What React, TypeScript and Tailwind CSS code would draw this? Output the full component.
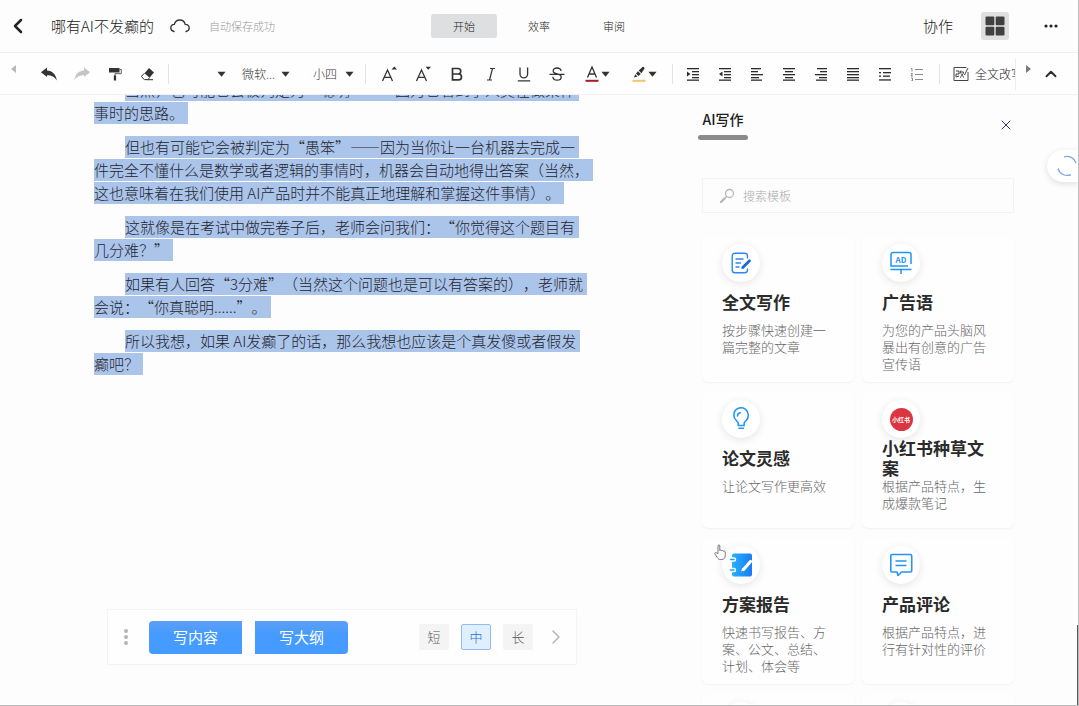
import React from 'react';
import { ChevronLeft, ChevronUp, ChevronRight, X } from 'lucide-react';

const Caret = () => (
  <svg viewBox="0 0 10 6" className="w-[9px] h-[6px] shrink-0 text-[#333] pointer-events-none" fill="currentColor">
    <path d="M0.5 0.5h9L5 6z" />
  </svg>
);

const Divider = ({ className }: { className: string }) => (
  <div className={`w-px h-5 bg-[#e3e3e3] shrink-0 ${className}`}></div>
);

const ToolButton = ({ label, className, children }: { label: string; className: string; children: React.ReactNode }) => (
  <button aria-label={label} className={`h-8 shrink-0 flex items-center justify-center text-[#2b2b2b] ${className}`}>
    {children}
  </button>
);

const Dropdown = ({ label, value, className }: { label: string; value: string; className: string }) => (
  <div className="w-16 shrink-0 flex items-center justify-end gap-1">
    <select
      aria-label={label}
      className={`appearance-none bg-transparent text-[12px] leading-4 font-light text-[#333] outline-none ${className}`}
    >
      <option>{value}</option>
    </select>
    <Caret />
  </div>
);

// Horizontal strokes of the paragraph icons: [x, y, width]
const Lines = ({ rows, children }: { rows: number[][]; children?: React.ReactNode }) => (
  <svg viewBox="0 0 14 14" className="w-[14px] h-[14px]" fill="currentColor">
    {rows.map(([x, y, w], i) => (
      <rect key={i} x={x} y={y} width={w} height="1.3" />
    ))}
    {children}
  </svg>
);

const paragraphTools = [
  {
    label: '增加缩进',
    icon: (
      <Lines rows={[[1, 1, 12], [6, 4, 7], [6, 7, 7], [6, 10, 7], [1, 12.5, 12]]}>
        <path d="M1 4.5v5L4.5 7z" />
      </Lines>
    ),
  },
  {
    label: '减少缩进',
    icon: (
      <Lines rows={[[1, 1, 12], [6, 4, 7], [6, 7, 7], [6, 10, 7], [1, 12.5, 12]]}>
        <path d="M4.5 4.5v5L1 7z" />
      </Lines>
    ),
  },
  { label: '左对齐', icon: <Lines rows={[[1, 1, 10], [1, 4, 7], [1, 7, 12], [1, 10, 8], [1, 12.5, 11]]} /> },
  { label: '居中', icon: <Lines rows={[[1, 1, 12], [3, 4, 8], [1, 7, 12], [3, 10, 8], [1, 12.5, 12]]} /> },
  { label: '右对齐', icon: <Lines rows={[[3, 1, 10], [6, 4, 7], [1, 7, 12], [5, 10, 8], [2, 12.5, 11]]} /> },
  { label: '两端对齐', icon: <Lines rows={[[1, 1, 12], [1, 4, 12], [1, 7, 12], [1, 10, 12], [1, 12.5, 12]]} /> },
  {
    label: '项目符号',
    icon: <Lines rows={[[1, 1, 12], [1, 5, 2], [5, 5, 8], [1, 8.5, 2], [5, 8.5, 7], [1, 12.3, 12]]} />,
  },
  {
    label: '编号列表',
    icon: (
      <svg viewBox="0 0 14 14" className="w-[14px] h-[14px]" fill="none" stroke="#888" strokeWidth="1">
        <path d="M5 2.5h8M5 7.5h8M5 12.5h8M1 1.5h1v3M1 6.5h1.5L1 9h2M1 11h1.5v3H1" />
      </svg>
    ),
  },
];

const paragraphs = [
  ['当然，也可能它会被判定为“聪明”——因为它看到了人类在做某件', '事时的思路。'],
  [
    '但也有可能它会被判定为“愚笨”——因为当你让一台机器去完成一',
    '件完全不懂什么是数学或者逻辑的事情时，机器会自动地得出答案（当然，',
    '这也意味着在我们使用 AI产品时并不能真正地理解和掌握这件事情）。',
  ],
  ['这就像是在考试中做完卷子后，老师会问我们：“你觉得这个题目有', '几分难？”'],
  ['如果有人回答“3分难”（当然这个问题也是可以有答案的），老师就', '会说：“你真聪明......”。'],
  ['所以我想，如果 AI发癫了的话，那么我想也应该是个真发傻或者假发', '癫吧？'],
];

const ArticleIcon = () => (
  <svg viewBox="0 0 24 24" className="w-6 h-6" fill="none" stroke="#2f86f0" strokeWidth="1.4" strokeLinecap="round">
    <path d="M18.5 7V5a2.8 2.8 0 0 0-2.8-2.8H6A2.8 2.8 0 0 0 3.2 5v14A2.8 2.8 0 0 0 6 21.800h9.700a2.800 2.800 0 0 0 2.800-2.800v-1" />
    <path d="M7 8h7M7 12h4.500M7 16h3" />
    <path d="M20.500 9.800l-6.500 6.500" stroke="#1667e0" strokeWidth="2.800" />
    <path d="M13.200 15.500l-1 2.700 2.700-1z" fill="#1667e0" stroke="none" />
  </svg>
);

const AdIcon = () => (
  <svg viewBox="0 0 24 24" className="w-6 h-6" fill="none" stroke="#1e96f5" strokeWidth="1.500">
    <path d="M22 13V3.500a2 2 0 0 0-2-2H4a2 2 0 0 0-2 2V15h17M1.500 18.500h21M12 18.500V23" />
    <text x="12" y="11.500" fontSize="8" fontWeight="bold" textAnchor="middle" fill="#1e96f5" stroke="none">AD</text>
  </svg>
);

const BulbIcon = () => (
  <svg viewBox="0 0 24 24" className="w-6 h-6" fill="none" stroke="#2196f3" strokeWidth="1.600" strokeLinecap="round">
    <path d="M9.300 18.500v-1.700c0-1.300-.8-2.100-1.900-3.300A7.200 7.200 0 1 1 19.200 9c0 2-1 3.500-2.400 4.800-1 1-1.700 1.700-1.700 3v1.700z" />
    <path d="M10 21.300h4.500M8.500 9a3.600 3.600 0 0 1 2.700-3.200" />
  </svg>
);

const RedBookIcon = () => (
  <div className="w-[23px] h-[23px] rounded-full bg-[#dc3540] flex items-center justify-center">
    <svg viewBox="0 0 20 10" className="w-5 h-[10px]">
      <text x="10" y="7.500" fontSize="6" fontWeight="bold" textAnchor="middle" fill="#fff">小红书</text>
    </svg>
  </div>
);

const NotebookIcon = () => (
  <svg viewBox="0 0 24 24" className="w-6 h-6">
    <defs>
      <linearGradient id="notebook" x1="0" x2="1">
        <stop offset="0" stopColor="#27b1fb" />
        <stop offset="1" stopColor="#1b7bf2" />
      </linearGradient>
    </defs>
    <rect x="3" y="0.500" width="20" height="23" rx="2" fill="url(#notebook)" />
    <path d="M1.500 6.500H5M1.500 17H5" stroke="#fff" strokeWidth="4.500" strokeLinecap="round" />
    <path d="M1.500 6.500H5M1.500 17H5" stroke="#1fa0f8" strokeWidth="1.500" strokeLinecap="round" />
    <path d="M21.500 8.500l-7 8" stroke="#fff" strokeWidth="3.200" strokeLinecap="round" />
    <path d="M13.500 15l-1.500 3.500 3.500-1.500z" fill="#fff" />
  </svg>
);

const CommentIcon = () => (
  <svg viewBox="0 0 24 24" className="w-6 h-6" fill="none" stroke="#2594f5" strokeWidth="1.600" strokeLinejoin="round">
    <path d="M3 1.500h18.500a1.200 1.200 0 0 1 1.200 1.200v15.100a1.200 1.200 0 0 1-1.200 1.200H12.500L9 22.500 8 19H3a1.200 1.200 0 0 1-1.200-1.200V2.700A1.200 1.200 0 0 1 3 1.500z" />
    <path d="M6.500 8h11M6.500 12.500h11" />
  </svg>
);

const templates = [
  { title: '全文写作', text: '按步骤快速创建一篇完整的文章', icon: <ArticleIcon /> },
  { title: '广告语', text: '为您的产品头脑风暴出有创意的广告宣传语', icon: <AdIcon /> },
  { title: '论文灵感', text: '让论文写作更高效', icon: <BulbIcon /> },
  { title: '小红书种草文案', text: '根据产品特点，生成爆款笔记', icon: <RedBookIcon /> },
  { title: '方案报告', text: '快速书写报告、方案、公文、总结、计划、体会等', icon: <NotebookIcon /> },
  { title: '产品评论', text: '根据产品特点，进行有针对性的评价', icon: <CommentIcon /> },
  { title: '', text: '', icon: null },
  { title: '', text: '', icon: null },
];

const Header = () => (
  <header className="h-[53px] shrink-0 border-b border-[#efefef] grid grid-cols-[1fr_auto_1fr] items-center">
    <div className="flex items-center">
      <button aria-label="返回" className="ml-1 w-7 flex justify-center text-[#222]">
        <ChevronLeft className="w-6 h-6" strokeWidth={2.5} />
      </button>
      <h1 className="ml-[19px] text-[15px] font-light text-[#222]">哪有AI不发癫的</h1>
      <svg viewBox="0 0 20 14" className="ml-4 w-5 h-[14px]" fill="none" stroke="#333" strokeWidth="1.300" strokeLinecap="round">
        <path d="M4 12.500C2 12 .8 10.800.8 9c0-2 1.500-3.500 3.500-3.600C5 2.800 7 1 9.800 1s4.900 1.900 5.400 4.300c2.300.1 4 1.600 4 3.700 0 1.800-1.200 3.100-3.200 3.500" />
      </svg>
      <span className="ml-[19px] text-[11px] font-light text-[#999]">自动保存成功</span>
    </div>
    <nav className="flex items-center gap-[9px] text-[11px] font-light text-[#222]">
      <button className="w-[66px] h-6 rounded-[3px] bg-[#dedfe0]">开始</button>
      <button className="w-[66px] h-6">效率</button>
      <button className="w-[66px] h-6">审阅</button>
    </nav>
    <div className="flex items-center justify-end pr-[19px]">
      <button className="text-[15px] font-light text-[#222]">协作</button>
      <button aria-label="应用" className="ml-7 w-7 h-7 rounded-[3px] bg-[#dfdfdf] flex items-center justify-center">
        <svg viewBox="0 0 20 20" className="w-5 h-5" fill="#404040">
          <rect x="0.500" y="0.500" width="8.800" height="8.800" rx="1" />
          <rect x="10.700" y="0.500" width="8.800" height="8.800" rx="1" />
          <rect x="0.500" y="10.700" width="8.800" height="8.800" rx="1" />
          <rect x="10.700" y="10.700" width="8.800" height="8.800" rx="1" />
        </svg>
      </button>
      <button aria-label="更多" className="ml-[34px] w-4 h-7 flex items-center justify-center">
        <svg viewBox="0 0 14 4" className="w-[14px] h-1" fill="#222">
          <circle cx="2" cy="2" r="1.600" />
          <circle cx="7" cy="2" r="1.600" />
          <circle cx="12" cy="2" r="1.600" />
        </svg>
      </button>
    </div>
  </header>
);

const Toolbar = () => (
  <div role="toolbar" className="h-[42px] shrink-0 flex items-center bg-[#fefefe] border-b border-[#f0f0f0]">
    <ToolButton label="向左滚动" className="w-8 pr-[6px] pb-[10px]">
      <svg viewBox="0 0 5 8" className="w-[5px] h-2" fill="#b9b9bd"><path d="M5 0v8L0 4z" /></svg>
    </ToolButton>
    <ToolButton label="撤销" className="w-[33px]">
      <svg viewBox="0 0 16 14" className="w-4 h-[14px]" fill="#333">
        <path d="M0 5.200L6 .5v3c5 .2 9 3.500 9.800 10-2.300-3.600-5-5.200-9.800-5.200V10z" />
      </svg>
    </ToolButton>
    <ToolButton label="重做" className="w-[33px]">
      <svg viewBox="0 0 16 14" className="w-4 h-[14px]" fill="#c4c4c4">
        <path d="M16 5.200L10 .5v3C5 3.700 1 7 .2 13.500c2.300-3.600 5-5.200 9.800-5.200V10z" />
      </svg>
    </ToolButton>
    <ToolButton label="格式刷" className="w-[33px]">
      <svg viewBox="0 0 14 14" className="w-[14px] h-[14px]" fill="#333">
        <rect x="1" y="1" width="10.500" height="4.500" />
        <path d="M11.500 2.500h1.800v4.200H7V9" stroke="#333" strokeWidth="0.800" fill="none" />
        <rect x="5.800" y="8.500" width="2.300" height="5" />
      </svg>
    </ToolButton>
    <ToolButton label="清除格式" className="w-[33px]">
      <svg viewBox="0 0 14 14" className="w-[14px] h-[14px]" fill="#333">
        <path d="M8 1l5 4.500-4.500 5.300-5-4.500z" />
        <path d="M3.300 6.300L.8 9c-.4.500-.3.900 0 1.200l2.700 2.400h3.300l1.700-1.800" fill="none" stroke="#333" strokeWidth="1" />
        <path d="M6 12.200h6v1H6z" />
      </svg>
    </ToolButton>
    <Divider className="ml-1" />
    <div className="flex -ml-[7px]">
      <Dropdown label="样式" value="" className="w-9" />
      <Dropdown label="字体" value="微软..." className="w-[35px]" />
      <Dropdown label="字号" value="小四" className="w-7" />
    </div>
    <Divider className="ml-[11px]" />
    <div className="ml-[6px] flex shrink-0">
      <ToolButton label="增大字号" className="w-[34px]">
        <svg viewBox="0 0 16 16" className="w-4 h-4" fill="none" stroke="#333" strokeWidth="1.300">
          <path d="M1.500 15L6.500 4l5 11M3.300 11.300h6.400" />
          <path d="M10.500 3.500L13.300.5 16 3.500z" fill="#333" stroke="none" />
        </svg>
      </ToolButton>
      <ToolButton label="减小字号" className="w-[34px]">
        <svg viewBox="0 0 16 16" className="w-4 h-4" fill="none" stroke="#333" strokeWidth="1.300">
          <path d="M1.500 15L6.500 4l5 11M3.300 11.300h6.400" />
          <path d="M10.500 .8L13.300 3.800 16 .8z" fill="#333" stroke="none" />
        </svg>
      </ToolButton>
      <ToolButton label="加粗" className="w-[34px]">
        <svg viewBox="0 0 14 16" className="w-[14px] h-4" fill="none" stroke="#333" strokeWidth="1.700">
          <path d="M2.500 2.500h5.500a2.700 2.700 0 0 1 0 5.500H2.500zM2.500 8h6.100a2.900 2.900 0 0 1 0 5.800H2.500z" />
        </svg>
      </ToolButton>
      <ToolButton label="斜体" className="w-[33px]">
        <svg viewBox="0 0 14 16" className="w-[14px] h-4" fill="none" stroke="#333" strokeWidth="1.200">
          <path d="M6 2.500h5M3 14h5M8.500 2.500L5.500 14" />
        </svg>
      </ToolButton>
      <ToolButton label="下划线" className="w-[33px]">
        <svg viewBox="0 0 14 16" className="w-[14px] h-4" fill="none" stroke="#333" strokeWidth="1.300">
          <path d="M3 1.500v6.500a3.800 3.800 0 0 0 7.600 0V1.500M.8 14.800h12.400" />
        </svg>
      </ToolButton>
      <ToolButton label="删除线" className="w-[34px]">
        <svg viewBox="0 0 16 16" className="w-4 h-4" fill="none" stroke="#333" strokeWidth="1.300">
          <path d="M12 5c-.2-2-1.700-3-4-3S4.200 3.200 4.200 5c0 4 8 1.800 8 6 0 2-1.700 3.200-4.200 3.200S4 13 3.800 10.800M.5 8.300h15" />
        </svg>
      </ToolButton>
      <ToolButton label="字体颜色" className="w-[47px] gap-[2px]">
        <svg viewBox="0 0 14 16" className="w-[14px] h-4" fill="none" stroke="#333" strokeWidth="1.300">
          <path d="M2.500 11.500L7 1l4.500 10.500M4 8h6" />
          <path d="M.5 14.800h13" stroke="#b01722" strokeWidth="2" />
        </svg>
        <Caret />
      </ToolButton>
      <ToolButton label="突出显示" className="w-[47px] gap-[2px]">
        <svg viewBox="0 0 14 16" className="w-[14px] h-4" fill="#333">
          <path d="M2 11.500l1.200-3.200 2.300 2.300zM4 7.500l2-2.300 2.800 2.800-2.400 2zM6.700 4.500L10.500 1c1-.6 2.400.7 1.900 1.800L9.400 7.200z" />
          <path d="M.5 13.800h13v2H.5z" fill="#f2c46e" />
        </svg>
        <Caret />
      </ToolButton>
    </div>
    <Divider className="ml-1" />
    <div className="ml-1 flex shrink-0">
      {paragraphTools.map((tool) => (
        <ToolButton key={tool.label} label={tool.label} className="w-8">
          {tool.icon}
        </ToolButton>
      ))}
    </div>
    <Divider className="ml-[6px]" />
    <button className="ml-[13px] flex-1 min-w-0 h-8 flex items-center gap-[6px] overflow-hidden border-r border-[#ededed] text-[12px] font-light text-[#222] whitespace-nowrap">
      <svg viewBox="0 0 16 16" className="w-4 h-4 shrink-0" fill="none" stroke="#444" strokeWidth="1">
        <path d="M15 6v8.500H1V1.500h12.500M3 5h3v3H3v3l3-1M8 4.500L7 7.500M7.500 6h3c-.4 2.500-1.500 4-3.500 5.500M8 7.500c.5 1.500 1.500 3 3 4M15 2l-3.500 7" />
      </svg>
      全文改写
    </button>
    <ToolButton label="向右滚动" className="w-[24px] pb-[10px]">
      <svg viewBox="0 0 5 8" className="w-[5px] h-2" fill="#77797d"><path d="M0 0v8l5-4z" /></svg>
    </ToolButton>
    <ToolButton label="收起工具栏" className="w-[38px] pr-4">
      <ChevronUp className="w-[18px] h-[18px]" strokeWidth={2.5} />
    </ToolButton>
  </div>
);

const PromptBar = () => (
  <div className="ml-[107px] mr-4 mb-10 max-w-[470px] h-[56px] shrink-0 border border-[#f3f3f3] bg-[#fefefe] flex items-center pl-4 pr-2">
    <svg viewBox="0 0 4 16" className="w-1 h-4" fill="#b5b5b5">
      <circle cx="2" cy="2" r="2" />
      <circle cx="2" cy="8" r="2" />
      <circle cx="2" cy="14" r="2" />
    </svg>
    <button className="ml-[21px] w-[93px] h-[33px] rounded-l-[4px] bg-linear-to-b from-[#5c9ff5] to-[#459bff] to-40% text-[15px] text-white">
      写内容
    </button>
    <button className="ml-[13px] w-[93px] h-[33px] rounded-r-[4px] bg-linear-to-b from-[#5c9ff5] to-[#459bff] to-40% text-[15px] text-white">
      写大纲
    </button>
    <div className="ml-auto flex gap-3 text-[13px] font-light text-[#555]">
      <button className="w-[30px] h-[26px] rounded-[2px] bg-[#f4f4f4]">短</button>
      <button className="w-[30px] h-[26px] rounded-[2px] bg-[#e0effe] border border-[#8fbdf0] text-[#2b6fc9]">中</button>
      <button className="w-[30px] h-[26px] rounded-[2px] bg-[#f4f4f4]">长</button>
    </div>
    <button aria-label="下一个" className="ml-[11px] text-[#b5b5b5]">
      <ChevronRight className="w-6 h-6" strokeWidth={1.5} />
    </button>
  </div>
);

const WritingPanel = () => (
  <aside className="relative w-[386px] shrink-0 pl-[10px] pr-16 pt-3 overflow-hidden">
    <div className="flex items-start justify-between">
      <h2 className="w-[50px] -ml-1 text-[14px] leading-6 font-medium text-[#1c1c1c] text-center whitespace-nowrap">
        AI写作
        <div className="mt-1 h-[5px] rounded-full bg-[#8b8b8b]"></div>
      </h2>
      <button aria-label="关闭" className="mt-[10px] text-[#2c3a55]">
        <X className="w-4 h-4" strokeWidth={1.5} />
      </button>
    </div>
    <label className="mt-[38px] h-[35px] flex items-center border border-[#f2f2f2] pl-4">
      <svg viewBox="0 0 16 16" className="w-4 h-4 shrink-0" fill="none" stroke="#b8b8b8" strokeLinecap="round">
        <circle cx="10.500" cy="5.500" r="4" strokeWidth="1.300" />
        <path d="M7.500 8.500L6 10" strokeWidth="1.200" />
        <path d="M5.500 10.500L2 14" strokeWidth="2.400" />
      </svg>
      <input
        type="text"
        aria-label="搜索模板"
        placeholder="搜索模板"
        className="ml-2 flex-1 min-w-0 bg-transparent text-[12px] font-light text-[#333] placeholder:text-[#aaa] outline-none"
      />
    </label>

    <div className="mt-[23px] grid grid-cols-2 gap-x-2 gap-y-[10px]">
      {templates.map((item, index) => (
        <div
          key={index}
          className="min-h-[136px] px-5 pt-2 pb-[10px] rounded-md bg-[#fefefe] shadow-[0_1px_2px_rgba(0,0,0,0.05)]"
        >
          <div className="w-[38px] h-[38px] rounded-full bg-white shadow-[0_2px_8px_rgba(0,0,0,0.1)] flex items-center justify-center">
            {item.icon}
          </div>
          <h3 className="h-[39px] flex items-center text-[17px] leading-5 font-bold text-[#2b2b2b]">{item.title}</h3>
          <p className="text-[13px] leading-[17px] font-light text-[#666]">{item.text}</p>
        </div>
      ))}
    </div>

    {/* Hand pointer */}
    <svg viewBox="0 0 12 16" className="absolute left-[22px] top-[449px] w-3 h-4" fill="#fff" stroke="#555" strokeWidth="0.800">
      <path d="M4 9.500V1.800C4 .6 5.800.6 5.800 1.800V6.500C6 5.800 7.500 5.900 7.600 6.800 8 6.200 9.300 6.400 9.400 7.300c.6-.5 1.900-.2 1.900.9v3.300c0 2.300-1.300 4-3.600 4H6.300c-1.500 0-2.300-.9-3-2L.8 9.800C.3 8.800 1.600 8.100 2.400 8.900z" />
    </svg>

    {/* Assistant bubble docked to the right edge */}
    <button
      aria-label="助手"
      className="absolute right-0 top-[55px] w-[31px] h-8 rounded-l-full bg-white shadow-[0_2px_6px_rgba(0,0,0,0.12)] flex items-center justify-end"
    >
      <svg viewBox="0 0 22 22" className="w-[22px] h-[22px]" fill="none" stroke="#7ea6ea" strokeWidth="1.300">
        <path d="M8 1.800A9.500 9.500 0 0 1 20 8M2 13.500A9.500 9.500 0 0 0 15 19.600" />
      </svg>
    </button>
  </aside>
);

const App = () => {
  return (
    <div
      lang="zh-CN"
      className="relative h-screen flex flex-col overflow-hidden bg-[#fdfdfd] border-r border-b border-[#bdbdbd] font-['Noto_Sans_CJK_SC','Noto_Sans',sans-serif]"
    >
      <Header />
      <Toolbar />
      <div className="flex-1 min-h-0 flex">
        <main className="flex-1 min-w-0 flex flex-col">
          <article className="flex-1 min-h-0 overflow-hidden pl-[94px] text-[15px] font-light text-[#1f2430] [text-spacing-trim:space-all]">
            <div className="-mt-4">
              {paragraphs.map((lines, index) => (
                <p key={index} className="mb-3">
                  {lines.map((line, i) => (
                    <span
                      key={i}
                      className="block w-fit h-[22px] mb-px pr-1 leading-[22px] whitespace-nowrap bg-[#abc4ea] first:ml-[31px]"
                    >
                      {line}
                    </span>
                  ))}
                </p>
              ))}
            </div>
          </article>
          <PromptBar />
        </main>
        <WritingPanel />
      </div>
      {/* Scroll thumb */}
      <div className="absolute right-0 bottom-0 w-px h-20 bg-[#555]"></div>
    </div>
  );
};

export default App;
